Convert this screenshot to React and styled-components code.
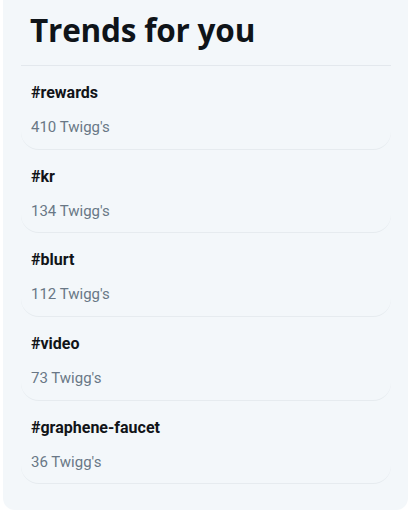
import React from "react";
import styled, { createGlobalStyle } from "styled-components";

const GlobalStyle = createGlobalStyle`
  body {
    margin: 0;
    background: #ffffff;
    font-family: Roboto, "Liberation Sans", sans-serif;
  }
`;

const trends = [
  { tag: "#rewards", count: 410 },
  { tag: "#kr", count: 134 },
  { tag: "#blurt", count: 112 },
  { tag: "#video", count: 73 },
  { tag: "#graphene-faucet", count: 36 },
];

function App() {
  return (
    <>
      <GlobalStyle />
      <Panel>
        <Title>Trends for you</Title>
        <List>
          {trends.map((trend) => (
            <TrendItem key={trend.tag}>
              <Tag>{trend.tag}</Tag>
              <Count>{trend.count} Twigg's</Count>
            </TrendItem>
          ))}
        </List>
      </Panel>
    </>
  );
}

const Panel = styled.aside`
  box-sizing: border-box;
  margin-left: 3px;
  width: 405px;
  height: 510px;
  background: #f3f7fa;
  border-radius: 0 0 12px 12px;
  padding: 0 17px 0 18px;
`;

const Title = styled.h2`
  box-sizing: border-box;
  height: 66px;
  margin: 0;
  padding: 8px 0 0 9px;
  font-family: "Open Sans", "Noto Sans", sans-serif;
  font-size: 31.5px;
  font-weight: 700;
  line-height: 44px;
  letter-spacing: -0.2px;
  color: #0f1419;
  border-bottom: 1px solid #e3e8ed;
`;

const List = styled.ul`
  list-style: none;
  margin: 0;
  padding: 0;
`;

const TrendItem = styled.li`
  box-sizing: border-box;
  height: 83.7px;
  padding: 16px 10px 0;
  border-bottom: 1px solid #e6ebef;
  border-radius: 0 0 18px 18px;
`;

const Tag = styled.div`
  font-size: 16px;
  font-weight: 700;
  line-height: 22px;
  color: #111418;
`;

const Count = styled.div`
  margin-top: 13px;
  font-size: 15px;
  line-height: 20px;
  color: #697786;
`;

export default App;
